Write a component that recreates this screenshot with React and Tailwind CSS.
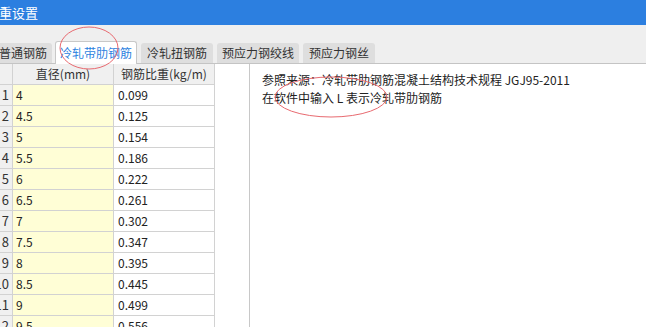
const rows = [
  { n: 1, d: '4', w: '0.099' },
  { n: 2, d: '4.5', w: '0.125' },
  { n: 3, d: '5', w: '0.154' },
  { n: 4, d: '5.5', w: '0.186' },
  { n: 5, d: '6', w: '0.222' },
  { n: 6, d: '6.5', w: '0.261' },
  { n: 7, d: '7', w: '0.302' },
  { n: 8, d: '7.5', w: '0.347' },
  { n: 9, d: '8', w: '0.395' },
  { n: 10, d: '8.5', w: '0.445' },
  { n: 11, d: '9', w: '0.499' },
  { n: 12, d: '9.5', w: '0.556' },
];

const tabs = [
  { label: '普通钢筋', w: 'w-[58px] ml-[-6px]' },
  { label: '冷轧带肋钢筋', w: 'w-[82px] ml-[3px]', active: true },
  { label: '冷轧扭钢筋', w: 'w-[72px] ml-[4px]' },
  { label: '预应力钢绞线', w: 'w-[82px] ml-[4px]' },
  { label: '预应力钢丝', w: 'w-[72px] ml-[4px]' },
];

export default function App() {
  return (
    <div
      className="relative w-[646px] h-[327px] overflow-hidden bg-[#efefef] text-[12px] text-[#222]"
      style={{ fontFamily: '"Noto Sans CJK SC", "Noto Sans", sans-serif' }}
    >
      {/* title bar */}
      <div className="h-[25px] bg-[#2c7fe0] text-white text-[13px] flex items-center leading-none">
        <span className="ml-[-1px]">重设置</span>
      </div>

      {/* tab strip */}
      <div className="h-[39px] flex items-end border-b border-[#c4c4c4]">
        {tabs.map((t) =>
          t.active ? (
            <div
              key={t.label}
              className={`${t.w} h-[23px] mb-[-1px] bg-white border border-b-0 border-[#c8c8c8] rounded-t-[3px] text-[#2c7fe0] flex items-center justify-center leading-none`}
            >
              {t.label}
            </div>
          ) : (
            <div
              key={t.label}
              className={`${t.w} h-[20px] bg-[#dedede] rounded-t-[3px] text-[#333] flex items-center justify-center leading-none`}
            >
              {t.label}
            </div>
          )
        )}
      </div>

      {/* body */}
      <div className="flex h-[263px]">
        <div className="w-[250px] shrink-0 bg-white border-r border-[#c8c8c8] overflow-hidden">
          <div className="w-[215px] border-r border-[#d2d2d2] h-full">
            <div className="flex h-[21px] bg-[#f0f0f0] border-b border-[#d2d2d2] text-[#333]">
              <div className="w-[13px] border-r border-[#d2d2d2]" />
              <div className="w-[101px] border-r border-[#d2d2d2] flex items-center justify-center">直径(mm)</div>
              <div className="flex-1 flex items-center justify-center">钢筋比重(kg/m)</div>
            </div>
            {rows.map((r) => (
              <div key={r.n} className="flex h-[21px] border-b border-[#d2d2d2]">
                <div className="w-[13px] bg-[#f0f0f0] border-r border-[#d2d2d2] flex items-center justify-end pr-[3px] overflow-hidden text-[13px] text-[#333]">
                  {r.n}
                </div>
                <div className="w-[101px] bg-[#fffed6] border-r border-[#d2d2d2] flex items-center pl-[3px]">
                  {r.d}
                </div>
                <div className="flex-1 flex items-center pl-[4px]">{r.w}</div>
              </div>
            ))}
          </div>
        </div>
        <div className="flex-1 bg-white pl-[12px] pt-[7px] leading-[18px]">
          <div>参照来源：冷轧带肋钢筋混凝土结构技术规程 JGJ95-2011</div>
          <div>在软件中输入 L 表示冷轧带肋钢筋</div>
        </div>
      </div>

      {/* red annotation marks */}
      <svg className="absolute inset-0 pointer-events-none" width="646" height="327">
        <ellipse cx="89" cy="48" rx="29" ry="21" fill="none" stroke="#e86a70" strokeWidth="1" />
        <ellipse cx="331" cy="97" rx="56" ry="20" fill="none" stroke="#e86a70" strokeWidth="1" />
      </svg>
    </div>
  );
}
